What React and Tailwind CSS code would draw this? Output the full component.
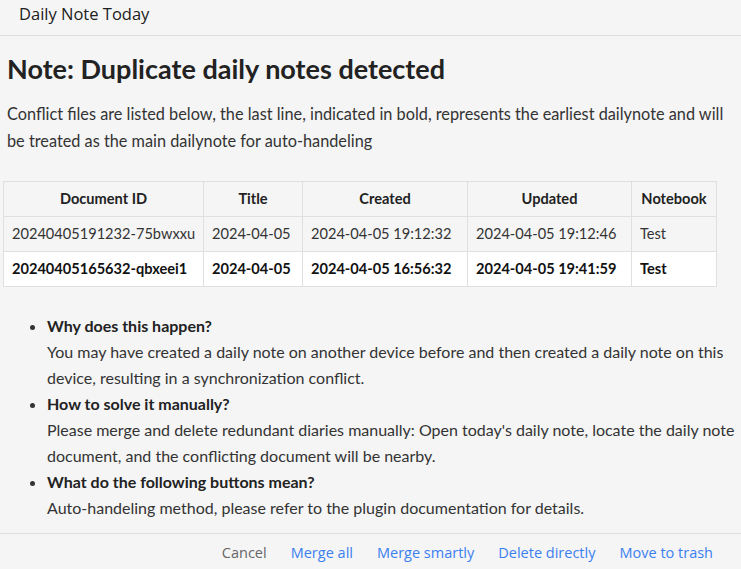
import React from "react";

const rows = [
  { id: "20240405191232-75bwxxu", title: "2024-04-05", created: "2024-04-05 19:12:32", updated: "2024-04-05 19:12:46", notebook: "Test", main: false },
  { id: "20240405165632-qbxeei1", title: "2024-04-05", created: "2024-04-05 16:56:32", updated: "2024-04-05 19:41:59", notebook: "Test", main: true },
];

const faq = [
  {
    q: "Why does this happen?",
    a: "You may have created a daily note on another device before and then created a daily note on this device, resulting in a synchronization conflict.",
  },
  {
    q: "How to solve it manually?",
    a: "Please merge and delete redundant diaries manually: Open today's daily note, locate the daily note document, and the conflicting document will be nearby.",
  },
  {
    q: "What do the following buttons mean?",
    a: "Auto-handeling method, please refer to the plugin documentation for details.",
  },
];

const colWidths = ["w-[200px]", "w-[99px]", "w-[165px]", "w-[164px]", "w-[85px]"];

export default function App() {
  return (
    <div className="w-[741px] h-[569px] bg-[#f5f5f5] text-[#222] flex flex-col overflow-hidden font-['Lato',sans-serif]">
      {/* title bar */}
      <div className="h-[36px] shrink-0 border-b border-[#dedede] pl-[19px] pt-[3px] text-[16.5px] leading-[22px] text-[#202020] font-['Open_Sans',sans-serif]">
        Daily Note Today
      </div>

      <div className="flex-1 pl-[7px] pr-[3px]">
        <h1 className="mt-[16px] text-[27px] font-bold leading-[34px] text-[#222]">Note: Duplicate daily notes detected</h1>
        <p className="mt-[14px] text-[16.3px] leading-[27px] text-[#333]">
          Conflict files are listed below, the last line, indicated in bold, represents the earliest dailynote and will be treated as the main dailynote for auto-handeling
        </p>

        <table className="mt-[27px] -ml-[4px] w-[713px] border-collapse text-[14.6px] text-[#333] table-fixed">
          <colgroup>
            {colWidths.map((w, i) => (
              <col key={i} className={w} />
            ))}
          </colgroup>
          <thead>
            <tr className="h-[35px]">
              {["Document ID", "Title", "Created", "Updated", "Notebook"].map((h) => (
                <th key={h} className="border border-[#dfdfdf] font-bold text-center px-[6px] text-[#222]">
                  {h}
                </th>
              ))}
            </tr>
          </thead>
          <tbody>
            {rows.map((r) => (
              <tr key={r.id} className={`h-[35px] ${r.main ? "bg-white font-bold text-[#111]" : ""}`}>
                <td className="border border-[#dfdfdf] px-[8px] whitespace-nowrap">{r.id}</td>
                <td className="border border-[#dfdfdf] px-[8px] whitespace-nowrap">{r.title}</td>
                <td className="border border-[#dfdfdf] px-[8px] whitespace-nowrap">{r.created}</td>
                <td className="border border-[#dfdfdf] px-[8px] whitespace-nowrap">{r.updated}</td>
                <td className="border border-[#dfdfdf] px-[8px] whitespace-nowrap">{r.notebook}</td>
              </tr>
            ))}
          </tbody>
        </table>

        <ul className="mt-[26px] pl-[40px] list-disc text-[16px] leading-[26px] text-[#333]">
          {faq.map((f) => (
            <li key={f.q}>
              <div className="font-bold text-[#222]">{f.q}</div>
              <div>{f.a}</div>
            </li>
          ))}
        </ul>
      </div>

      {/* footer buttons */}
      <div className="h-[36px] shrink-0 border-t border-[#dedede] flex items-start justify-end gap-[24px] pr-[28px] pt-[8px] text-[14.5px] leading-[22px] font-['Open_Sans',sans-serif]">
        <button className="text-[#666]">Cancel</button>
        <button className="text-[#3b7ff0]">Merge all</button>
        <button className="text-[#3b7ff0]">Merge smartly</button>
        <button className="text-[#3b7ff0]">Delete directly</button>
        <button className="text-[#3b7ff0]">Move to trash</button>
      </div>
    </div>
  );
}
